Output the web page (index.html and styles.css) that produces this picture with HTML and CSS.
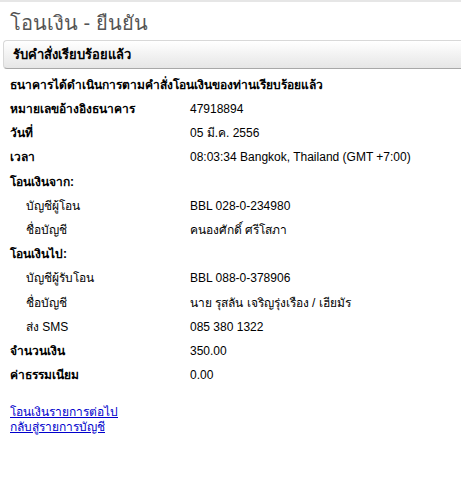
FILE: index.html
```html
<!DOCTYPE html>
<html lang="th">
<head>
<meta charset="utf-8">
<link rel="stylesheet" href="styles.css">
</head>
<body>
<div class="topbar"></div>
<h1 class="title">โอนเงิน - ยืนยัน</h1>
<div class="notice">รับคำสั่งเรียบร้อยแล้ว</div>
<div class="content">
  <p class="lead">ธนาคารได้ดำเนินการตามคำสั่งโอนเงินของท่านเรียบร้อยแล้ว</p>
  <div class="grid">
    <div class="lbl b">หมายเลขอ้างอิงธนาคาร</div><div class="val">47918894</div>
    <div class="lbl b">วันที่</div><div class="val">05 มี.ค. 2556</div>
    <div class="lbl b">เวลา</div><div class="val">08:03:34 Bangkok, Thailand (GMT +7:00)</div>
    <div class="lbl b">โอนเงินจาก:</div><div class="val"></div>
    <div class="lbl ind">บัญชีผู้โอน</div><div class="val">BBL 028-0-234980</div>
    <div class="lbl ind">ชื่อบัญชี</div><div class="val">คนองศักดิ์ ศรีโสภา</div>
    <div class="lbl b">โอนเงินไป:</div><div class="val"></div>
    <div class="lbl ind">บัญชีผู้รับโอน</div><div class="val">BBL 088-0-378906</div>
    <div class="lbl ind">ชื่อบัญชี</div><div class="val">นาย รุสลัน เจริญรุ่งเรือง / เฮียมัร</div>
    <div class="lbl ind">ส่ง SMS</div><div class="val">085 380 1322</div>
    <div class="lbl b">จำนวนเงิน</div><div class="val">350.00</div>
    <div class="lbl b">ค่าธรรมเนียม</div><div class="val">0.00</div>
  </div>
  <div class="links">
    <a href="#">โอนเงินรายการต่อไป</a>
    <a href="#">กลับสู่รายการบัญชี</a>
  </div>
</div>
</body>
</html>
```
FILE: styles.css
```css
html, body { margin: 0; padding: 0; background: #fff; }
body { font-family: Tahoma, "Liberation Sans", "DejaVu Sans", sans-serif; font-size: 12px; color: #000; }
.topbar { height: 2px; background: #e6e6e6; }
.title { margin: 8px 0 0 10px; font-size: 20px; font-weight: normal; color: #555; line-height: 26px; height: 26px; }
.notice {
  margin: 4px 0 0 3px; height: 27px; line-height: 27px; padding-left: 9px;
  border: 1px solid #d8d8d8; border-bottom-color: #a8a8a8; border-right: none;
  border-radius: 4px 0 0 4px;
  background: linear-gradient(#ffffff, #e6e6e6);
  font-weight: bold; font-size: 13px;
}
.content { padding: 0 0 0 10px; }
.lead { margin: 7px 0 0 0; font-weight: bold; line-height: 18px; height: 18px; }
.grid { display: grid; grid-template-columns: 180px 1fr; grid-auto-rows: 24.2px; margin-top: 3px; align-items: center; }
.lbl, .val { line-height: 16px; height: 16px; }
.b { font-weight: bold; }
.ind { padding-left: 16px; }
.links { display: flex; flex-direction: column; margin-top: 18px; }
.links a { color: #0000cc; text-decoration: underline; align-self: flex-start; line-height: 15px; height: 15px; }
```
